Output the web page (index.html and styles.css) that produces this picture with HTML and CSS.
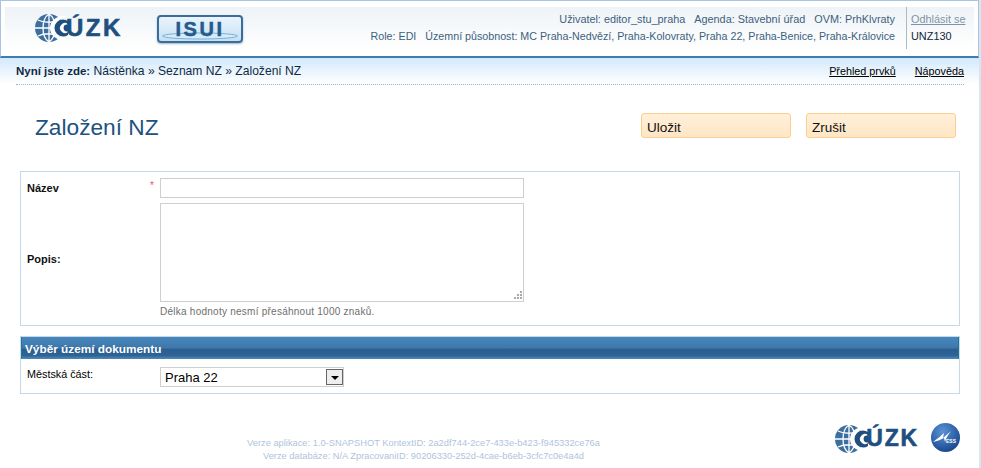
FILE: index.html
```html
<!DOCTYPE html>
<html>
<head>
    <meta charset="utf-8">
    <title>Založení NZ</title>
    <link rel="stylesheet" href="styles.css">
</head>
<body>
<div class="page">
    <!-- Header -->
    <div class="header">
        <div class="header-inner">
            <div class="logo-cuzk">
                <svg class="globe" width="34" height="30" viewBox="0 0 34 30">
                    <circle cx="15" cy="15" r="14" fill="#3c6f9f"/>
                    <path d="M1 15H29M15 1V29M4 7C10 10 20 10 26 7M4 23C10 20 20 20 26 23M15 1C7 6 7 24 15 29M15 1C23 6 23 24 15 29" fill="none" stroke="#fff" stroke-width="1.3"/>
                    <path d="M33 3C22 2 16 8 16 15C16 22 22 28 33 27C26 25 22 21 22 15C22 9 26 5 33 3Z" fill="#fff"/>
                    <circle cx="29" cy="15" r="8.5" fill="#1f4f7f"/>
                    <path d="M34 11A5 5 0 1 0 34 19Z" fill="#fff"/>
                    <circle cx="33" cy="15" r="3.4" fill="#1f4f7f"/>
                </svg>
                <span class="logo-text">ÚZK</span>
            </div>
            <div class="logo-isui">
                <svg class="isui-ring" width="76" height="8" viewBox="0 0 76 8">
                    <ellipse cx="38" cy="4" rx="37.5" ry="3" fill="#d6ebfa" stroke="#7eaed3"/>
                </svg>
                <span class="isui-text">ISUI</span>
            </div>
            <div class="user-info">
                <div class="user-line first-line">
                    <span>Uživatel: editor_stu_praha</span>
                    <span>Agenda: Stavební úřad</span>
                    <span>OVM: PrhKlvraty</span>
                </div>
                <div class="user-line">
                    <span>Role: EDI</span>
                    <span>Územní působnost: MC Praha-Nedvězí, Praha-Kolovraty, Praha 22, Praha-Benice, Praha-Královice</span>
                </div>
            </div>
            <div class="logout">
                <a class="logout-link" href="#">Odhlásit se</a>
                <div class="screen-code">UNZ130</div>
            </div>
        </div>
    </div>

    <!-- Breadcrumb -->
    <div class="crumb-bar">
        <div class="crumbs">
            <div><b class="crumb-lead">Nyní jste zde:</b> Nástěnka » Seznam NZ » Založení NZ</div>
            <div class="crumb-links">
                <a href="#">Přehled prvků</a>
                <a href="#">Nápověda</a>
            </div>
        </div>
    </div>

    <!-- Title and buttons -->
    <div class="title-row">
        <h1 class="title">Založení NZ</h1>
        <div class="buttons">
            <button class="btn">Uložit</button>
            <button class="btn">Zrušit</button>
        </div>
    </div>

    <!-- Form -->
    <div class="box form-box">
        <div class="form-row name-row">
            <label class="label">Název</label>
            <span class="required">*</span>
            <input class="text-input" type="text">
        </div>
        <div class="form-row desc-row">
            <label class="label">Popis:</label>
            <span class="required"></span>
            <div class="desc-field">
                <div class="textarea">
                    <svg class="grip" width="10" height="10" viewBox="0 0 10 10" fill="#a9a9a9">
                        <rect x="7" y="0" width="2" height="2"/>
                        <rect x="4" y="3" width="2" height="2"/>
                        <rect x="7" y="3" width="2" height="2"/>
                        <rect x="1" y="6" width="2" height="2"/>
                        <rect x="4" y="6" width="2" height="2"/>
                        <rect x="7" y="6" width="2" height="2"/>
                    </svg>
                </div>
                <div class="hint">Délka hodnoty nesmí přesáhnout 1000 znaků.</div>
            </div>
        </div>
    </div>

    <div class="box area-box">
        <div class="area-head">Výběr území dokumentu</div>
        <div class="area-row">
            <label class="area-label">Městská část:</label>
            <div class="select">
                <span>Praha 22</span>
                <span class="select-arrow"></span>
            </div>
        </div>
    </div>

    <!-- Footer -->
    <div class="footer">
        <div class="versions">
            <div>Verze aplikace: 1.0-SNAPSHOT KontextID: 2a2df744-2ce7-433e-b423-f945332ce76a</div>
            <div>Verze databáze: N/A ZpracovaniID: 90206330-252d-4cae-b6eb-3cfc7c0e4a4d</div>
        </div>
        <div class="footer-logos">
            <div class="logo-cuzk">
                <svg class="globe" width="34" height="30" viewBox="0 0 34 30">
                    <circle cx="15" cy="15" r="14" fill="#3c6f9f"/>
                    <path d="M1 15H29M15 1V29M4 7C10 10 20 10 26 7M4 23C10 20 20 20 26 23M15 1C7 6 7 24 15 29M15 1C23 6 23 24 15 29" fill="none" stroke="#fff" stroke-width="1.3"/>
                    <path d="M33 3C22 2 16 8 16 15C16 22 22 28 33 27C26 25 22 21 22 15C22 9 26 5 33 3Z" fill="#fff"/>
                    <circle cx="29" cy="15" r="8.5" fill="#1f4f7f"/>
                    <path d="M34 11A5 5 0 1 0 34 19Z" fill="#fff"/>
                    <circle cx="33" cy="15" r="3.4" fill="#1f4f7f"/>
                </svg>
                <span class="logo-text">ÚZK</span>
            </div>
            <div class="logo-ness">
                <svg width="29" height="29" viewBox="0 0 29 29">
                    <defs>
                        <radialGradient id="nessBall" cx="0.4" cy="0.3" r="0.8">
                            <stop offset="0" stop-color="#5a93d6"/>
                            <stop offset="1" stop-color="#123f85"/>
                        </radialGradient>
                    </defs>
                    <circle cx="14.5" cy="14.5" r="14.5" fill="url(#nessBall)"/>
                    <path d="M2 19C7 15 10 13 13 10L12 15L20 8C17 12 15 15 14 19L13 15C9 17 6 18 2 19Z" fill="#fff"/>
                    <text x="15" y="20" class="ness-text">ESS</text>
                </svg>
            </div>
        </div>
    </div>
</div>
</body>
</html>
```

FILE: styles.css
```css
body {
    margin: 0;
    background-color: #fff;
    font-family: "Liberation Sans", Arial, sans-serif;
    font-size: 11px;
    color: #000;
}
a {
    color: #000;
}
.page {
    width: 979px;
    height: 468px;
    border-right: 2px solid #d5e6f5;
    overflow: hidden;
}

/* header */
.header {
    height: 49px;
    border-top: 1px solid #a9c4de;
    border-left: 1px solid #a9c4de;
    border-right: 1px solid #a9c4de;
    border-bottom: 2px solid #3f7cb0;
    padding: 6px 4px 0 4px;
    background-color: #fff;
}
.header-inner {
    display: flex;
    align-items: flex-start;
    height: 42px;
    background: linear-gradient(#eef3f7, #f8fafb 60%, #fff);
}
.logo-cuzk {
    display: flex;
    align-items: center;
    height: 30px;
}
.header-inner .logo-cuzk {
    width: 88px;
    margin: 6px 0 0 29px;
}
.globe {
    flex-shrink: 0;
}
.logo-text {
    font-size: 24px;
    font-weight: bold;
    color: #1f4f7f;
    margin-left: -2px;
    letter-spacing: 2.5px;
    -webkit-text-stroke: 0.6px #1f4f7f;
}
.footer-logos .logo-text {
    font-size: 23px;
    letter-spacing: 1.8px;
}
.logo-isui {
    position: relative;
    width: 82px;
    height: 24px;
    margin: 8px 0 0 35px;
    border: 2px solid #3a6d9c;
    border-radius: 4px;
    background: linear-gradient(#eaf4fc, #c6e0f5);
    box-shadow: 0 1px 2px #9db4c8;
    text-align: center;
}
.isui-text {
    position: relative;
    font-size: 20px;
    font-weight: bold;
    line-height: 24px;
    letter-spacing: 2.5px;
    color: #245a8c;
    -webkit-text-stroke: 0.5px #245a8c;
}
.isui-ring {
    position: absolute;
    left: 3px;
    top: 15px;
}
.user-info {
    flex: 1;
    padding: 4px 11px 0 0;
    color: #3d5f80;
    font-size: 10.7px;
    text-align: right;
}
.user-line {
    height: 17px;
    line-height: 17px;
}
.first-line {
    font-size: 10.85px;
}
.user-line span {
    margin-left: 6px;
}
.logout {
    width: 68px;
    height: 42px;
    padding: 4px 0 0 4px;
    box-sizing: border-box;
    border-left: 1px solid #a9bcc4;
    font-size: 10.9px;
}
.logout-link {
    display: block;
    height: 17px;
    line-height: 17px;
    color: #8093a6;
}
.screen-code {
    line-height: 17px;
    color: #10253a;
}

/* breadcrumb */
.crumb-bar {
    height: 26px;
    padding: 0 15px 0 16px;
    background: linear-gradient(#d3e9fb, #fff);
}
.crumbs {
    display: flex;
    justify-content: space-between;
    height: 26px;
    line-height: 27px;
    font-size: 12.1px;
    color: #102a43;
    border-bottom: 1px dotted #9fb3c4;
}
.crumb-lead {
    font-size: 11.5px;
}
.crumb-links {
    font-size: 10.8px;
}
.crumb-links a {
    margin-left: 16px;
}

/* title */
.title-row {
    display: flex;
    justify-content: space-between;
    height: 87px;
}
.title {
    margin: 30px 0 0 35px;
    font-size: 22.7px;
    font-weight: normal;
    color: #21527f;
}
.buttons {
    display: flex;
    gap: 15px;
    margin: 29px 23px 0 0;
}
.btn {
    width: 150px;
    height: 25px;
    padding: 3px 0 0 5px;
    border: 1px solid #fbd08f;
    border-radius: 3px;
    background: linear-gradient(#fff0da, #ffe6c5);
    font-family: "Liberation Sans", Arial, sans-serif;
    font-size: 13.5px;
    color: #111;
    text-align: left;
}

/* form boxes */
.box {
    margin: 0 19px 0 20px;
    border: 1px solid #c4d9ea;
}
.form-box {
    padding: 6px 0 0 0;
    height: 147px;
}
.form-row {
    display: flex;
}
.name-row {
    align-items: center;
    height: 20px;
    margin-bottom: 5px;
}
.label {
    width: 129px;
    padding-left: 6px;
    box-sizing: border-box;
    font-weight: bold;
    color: #111;
}
.required {
    width: 10px;
    margin-top: 2px;
    color: #f2505f;
    font-size: 10px;
    align-self: flex-start;
}
.text-input {
    width: 364px;
    height: 20px;
    padding: 0;
    box-sizing: border-box;
    border: 1px solid #cfcfcf;
    outline: 0;
}
.desc-row .label {
    align-self: center;
    margin-top: -3px;
}
.textarea {
    position: relative;
    width: 364px;
    height: 99px;
    box-sizing: border-box;
    border: 1px solid #cfcfcf;
}
.grip {
    position: absolute;
    right: 0;
    bottom: 0;
}
.hint {
    margin-top: 4px;
    font-size: 10px;
    color: #6e6e6e;
    letter-spacing: 0.25px;
}
.area-box {
    margin-top: 10px;
    height: 56px;
}
.area-head {
    height: 22px;
    line-height: 24px;
    padding-left: 3px;
    border-left: 1px solid #1e7a8a;
    border-right: 1px solid #1e7a8a;
    border-bottom: 1px solid #4a83b5;
    box-sizing: border-box;
    background: linear-gradient(#4787bd 0, #3f78ab 50%, #2a5d90 60%, #2f6497 90%, #4a83b5 100%);
    color: #fff;
    font-weight: bold;
    font-size: 11.8px;
}
.area-row {
    display: flex;
    height: 33px;
}
.area-label {
    width: 139px;
    padding: 9px 0 0 6px;
    box-sizing: border-box;
    font-size: 10.8px;
}
.select {
    display: flex;
    align-items: center;
    justify-content: space-between;
    width: 184px;
    height: 20px;
    margin-top: 8px;
    padding-left: 4px;
    box-sizing: border-box;
    border: 1px solid #cfcfcf;
    font-size: 13px;
}
.select-arrow {
    position: relative;
    width: 17px;
    height: 16px;
    border: 1px solid #666;
    box-sizing: border-box;
    background-color: #eee;
}
.select-arrow::after {
    content: "";
    position: absolute;
    left: 4px;
    top: 6px;
    border-left: 4px solid transparent;
    border-right: 4px solid transparent;
    border-top: 4px solid #000;
}

/* footer */
.footer {
    position: relative;
    height: 70px;
}
.versions {
    padding-top: 43px;
    width: 847px;
    font-size: 9.3px;
    line-height: 13px;
    text-align: center;
    color: #b0c4dc;
}
.footer-logos {
    position: absolute;
    right: 19px;
    top: 29px;
    display: flex;
    align-items: center;
    gap: 12px;
}
.ness-text {
    font-size: 5px;
    font-weight: bold;
    fill: #fff;
    font-family: "Liberation Sans", Arial, sans-serif;
}
```
